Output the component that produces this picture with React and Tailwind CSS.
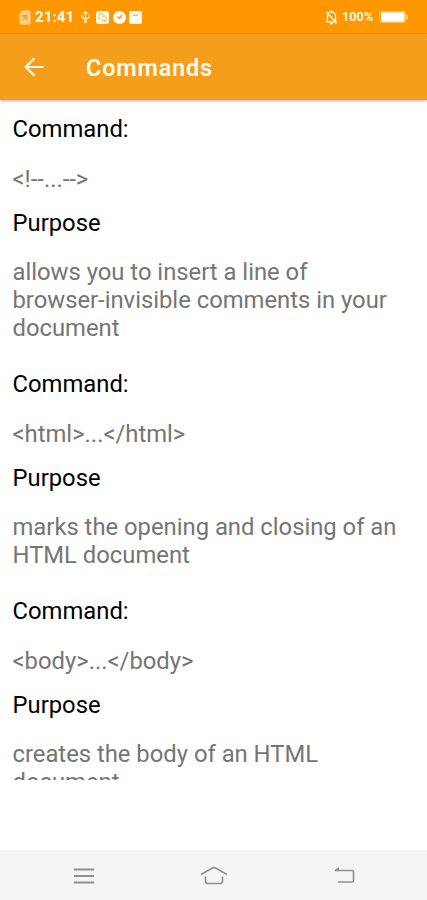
const commands = [
  {
    tag: "<!--...-->",
    purpose: "allows you to insert a line of browser-invisible comments in your document",
  },
  {
    tag: "<html>...</html>",
    purpose: "marks the opening and closing of an HTML document",
  },
  {
    tag: "<body>...</body>",
    purpose: "creates the body of an HTML document",
  },
];

const StatusBar = () => (
  <div className="flex h-[34px] shrink-0 items-center bg-[#ff9800] pl-[19px] pr-[18px] text-[#fffaf0]">
    {/* SIM card */}
    <svg className="h-[15px] w-3 shrink-0 opacity-60" viewBox="0 0 12 15">
      <path d="M4 .5h6.5a1 1 0 0 1 1 1v12a1 1 0 0 1-1 1h-9a1 1 0 0 1-1-1V4z" fill="currentColor" />
      <path d="M3.500 5.500l5 5M8.500 5.500l-5 5M3.500 5.500h5" stroke="#ff9800" strokeWidth="1.300" />
    </svg>
    <span className="ml-1 mt-px w-[40px] text-[15.200px] font-bold leading-none">21:41</span>
    {/* USB */}
    <svg className="ml-[5px] h-3 w-[11px] shrink-0" viewBox="0 0 11 14" fill="none" stroke="currentColor" strokeWidth="1.3">
      <path d="M5.5 1v11M1.5 4.500v3L5.500 10l4-2.500v-3" />
      <path d="M4 2.500L5.500.5 7 2.500z" fill="currentColor" />
      <circle cx="5.500" cy="12.300" r="1" fill="currentColor" />
    </svg>
    <svg className="ml-[5px] h-[13px] w-[13px] shrink-0" viewBox="0 0 13 13">
      <rect width="13" height="13" rx="3" fill="currentColor" />
      <path d="M3 9V4.500a2 2 0 0 1 4 0V7M5 9h3M8 5a2.300 2.300 0 1 1 0 4.500L10.500 11" fill="none" stroke="#ff9800" opacity=".7" />
    </svg>
    <svg className="ml-1 h-[13px] w-[13px] shrink-0" viewBox="0 0 13 13">
      <circle cx="6.500" cy="6.500" r="6.500" fill="currentColor" />
      <path d="M4.500 5.500l2 2L9 4" fill="none" stroke="#ff9800" strokeWidth="1.300" />
    </svg>
    <svg className="ml-[3px] h-[13px] w-[13px] shrink-0" viewBox="0 0 13 13">
      <rect width="13" height="13" rx="2" fill="currentColor" />
      <path d="M3.500 3c.8 2 5.200 2 6 0" fill="none" stroke="#ff9800" />
    </svg>
    {/* Muted bell */}
    <svg className="ml-auto h-[15px] w-[13px] shrink-0" viewBox="0 0 13 15" fill="none" stroke="currentColor" strokeWidth="1.300">
      <path d="M2.500 11.500V6a4 4 0 0 1 8 0v5.500M1 11.800h11M5 13.500h3M1.500 2l10 11M6.500 2V.5" />
    </svg>
    <span className="ml-1 mt-px w-[33px] text-[12.800px] font-semibold leading-none">100%</span>
    <svg className="ml-1 h-3 w-[30px] shrink-0" viewBox="0 0 30 12">
      <rect x=".5" y=".5" width="26" height="11" rx="2.500" fill="none" stroke="currentColor" opacity=".4" />
      <rect x="2" y="1.200" width="23.500" height="9.600" rx="1" fill="#fff" />
      <path d="M28 4v4" stroke="currentColor" strokeWidth="1.500" opacity=".7" />
    </svg>
  </div>
);

const AppBar = () => (
  <header className="relative z-10 flex h-[66px] shrink-0 items-center bg-[#f59e1b] pl-6 text-[#fffaf0] shadow-[0_1px_3px_rgba(60,50,90,0.4)]">
    <svg className="h-5 w-5" viewBox="0 0 20 20" fill="none" stroke="currentColor" strokeWidth="2.200">
      <path d="M19.500 10H2M10.500 1.200L1.700 10l8.800 8.800" />
    </svg>
    <h1 className="ml-[42px] mt-px text-[23.500px] font-semibold leading-7 tracking-[0.800px]">Commands</h1>
  </header>
);

const CommandItem = ({ tag, purpose }) => (
  <section className="mb-7">
    <h2 className="text-black">Command:</h2>
    <p className="mt-[22px]">{tag}</p>
    <h2 className="mt-4 text-black">Purpose</h2>
    <p className="mt-[21px]">{purpose}</p>
  </section>
);

const NavigationBar = () => (
  <nav className="flex h-[50px] shrink-0 items-center justify-between bg-[#f5f5f5] pl-[74px] pr-[72px] text-[#909090]">
    <svg className="h-5 w-5" viewBox="0 0 20 20" fill="none" stroke="currentColor" strokeWidth="1.800">
      <path d="M0 4.500h20M0 11h20M0 17.500h20" />
    </svg>
    <svg className="h-5 w-7" viewBox="0 0 28 20" fill="none" stroke="currentColor" strokeWidth="1.700">
      <path d="M1 9.500l11-6.300q2-1 4 0L27 9.500" />
      <path d="M5.500 11.500V16q0 2.500 2.500 2.500h12q2.500 0 2.500-2.500v-4.500" />
    </svg>
    <svg className="h-5 w-[21px]" viewBox="0 0 21 20" fill="none" stroke="currentColor" strokeWidth="1.700">
      <path d="M1 5.500h17q1.500 0 1.500 1.500v8.500q0 1.500-1.500 1.500H4" />
      <path d="M0 5.500l5-3.500v3.500z" fill="currentColor" stroke="none" />
    </svg>
  </nav>
);

const App = () => {
  return (
    <div className="flex h-screen flex-col overflow-hidden bg-white font-['Roboto',sans-serif]">
      <StatusBar />
      <AppBar />
      {/* Scroll area, the last entry runs past its lower edge */}
      <main className="h-[680px] shrink-0 overflow-hidden pl-[12.500px] pr-6 pt-[15px] text-[23.800px] leading-7 text-[#757575]">
        {commands.map((command) => (
          <CommandItem key={command.tag} {...command} />
        ))}
      </main>
      <div className="flex-1" />
      <NavigationBar />
    </div>
  );
};

export default App;
